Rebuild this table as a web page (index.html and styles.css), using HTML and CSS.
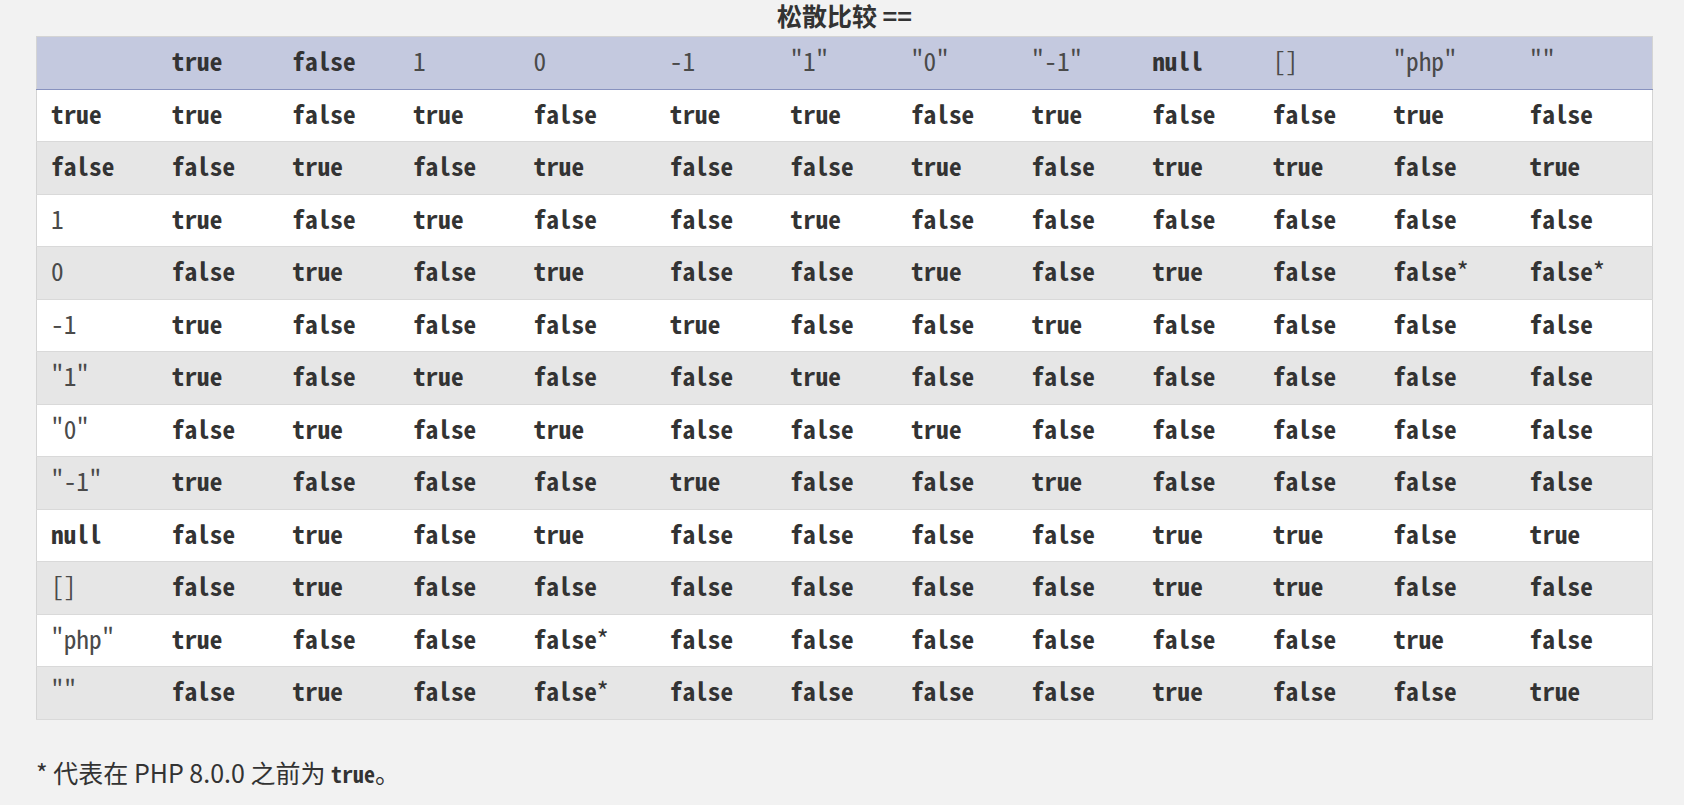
FILE: index.html
```html
<!DOCTYPE html>
<html lang="zh-CN">
<head>
<meta charset="utf-8">
<title>松散比较</title>
<link rel="stylesheet" href="styles.css">
</head>
<body>
<main class="page">
<table class="doctable">
<caption><strong>松散比较 <code class="cap-code">==</code></strong></caption>
<thead>
<tr><th></th><th><code class="b">true</code></th><th><code class="b">false</code></th><th><code class="c">1</code></th><th><code class="c">0</code></th><th><code class="c">-1</code></th><th><code class="c">"1"</code></th><th><code class="c">"0"</code></th><th><code class="c">"-1"</code></th><th><code class="b">null</code></th><th><code class="c">[]</code></th><th><code class="c">"php"</code></th><th><code class="c">""</code></th></tr>
</thead>
<tbody>
<tr><td><code class="b">true</code></td><td><code class="b">true</code></td><td><code class="b">false</code></td><td><code class="b">true</code></td><td><code class="b">false</code></td><td><code class="b">true</code></td><td><code class="b">true</code></td><td><code class="b">false</code></td><td><code class="b">true</code></td><td><code class="b">false</code></td><td><code class="b">false</code></td><td><code class="b">true</code></td><td><code class="b">false</code></td></tr>
<tr><td><code class="b">false</code></td><td><code class="b">false</code></td><td><code class="b">true</code></td><td><code class="b">false</code></td><td><code class="b">true</code></td><td><code class="b">false</code></td><td><code class="b">false</code></td><td><code class="b">true</code></td><td><code class="b">false</code></td><td><code class="b">true</code></td><td><code class="b">true</code></td><td><code class="b">false</code></td><td><code class="b">true</code></td></tr>
<tr><td><code class="c">1</code></td><td><code class="b">true</code></td><td><code class="b">false</code></td><td><code class="b">true</code></td><td><code class="b">false</code></td><td><code class="b">false</code></td><td><code class="b">true</code></td><td><code class="b">false</code></td><td><code class="b">false</code></td><td><code class="b">false</code></td><td><code class="b">false</code></td><td><code class="b">false</code></td><td><code class="b">false</code></td></tr>
<tr><td><code class="c">0</code></td><td><code class="b">false</code></td><td><code class="b">true</code></td><td><code class="b">false</code></td><td><code class="b">true</code></td><td><code class="b">false</code></td><td><code class="b">false</code></td><td><code class="b">true</code></td><td><code class="b">false</code></td><td><code class="b">true</code></td><td><code class="b">false</code></td><td><code class="b">false</code><span class="star">*</span></td><td><code class="b">false</code><span class="star">*</span></td></tr>
<tr><td><code class="c">-1</code></td><td><code class="b">true</code></td><td><code class="b">false</code></td><td><code class="b">false</code></td><td><code class="b">false</code></td><td><code class="b">true</code></td><td><code class="b">false</code></td><td><code class="b">false</code></td><td><code class="b">true</code></td><td><code class="b">false</code></td><td><code class="b">false</code></td><td><code class="b">false</code></td><td><code class="b">false</code></td></tr>
<tr><td><code class="c">"1"</code></td><td><code class="b">true</code></td><td><code class="b">false</code></td><td><code class="b">true</code></td><td><code class="b">false</code></td><td><code class="b">false</code></td><td><code class="b">true</code></td><td><code class="b">false</code></td><td><code class="b">false</code></td><td><code class="b">false</code></td><td><code class="b">false</code></td><td><code class="b">false</code></td><td><code class="b">false</code></td></tr>
<tr><td><code class="c">"0"</code></td><td><code class="b">false</code></td><td><code class="b">true</code></td><td><code class="b">false</code></td><td><code class="b">true</code></td><td><code class="b">false</code></td><td><code class="b">false</code></td><td><code class="b">true</code></td><td><code class="b">false</code></td><td><code class="b">false</code></td><td><code class="b">false</code></td><td><code class="b">false</code></td><td><code class="b">false</code></td></tr>
<tr><td><code class="c">"-1"</code></td><td><code class="b">true</code></td><td><code class="b">false</code></td><td><code class="b">false</code></td><td><code class="b">false</code></td><td><code class="b">true</code></td><td><code class="b">false</code></td><td><code class="b">false</code></td><td><code class="b">true</code></td><td><code class="b">false</code></td><td><code class="b">false</code></td><td><code class="b">false</code></td><td><code class="b">false</code></td></tr>
<tr><td><code class="b">null</code></td><td><code class="b">false</code></td><td><code class="b">true</code></td><td><code class="b">false</code></td><td><code class="b">true</code></td><td><code class="b">false</code></td><td><code class="b">false</code></td><td><code class="b">false</code></td><td><code class="b">false</code></td><td><code class="b">true</code></td><td><code class="b">true</code></td><td><code class="b">false</code></td><td><code class="b">true</code></td></tr>
<tr><td><code class="c">[]</code></td><td><code class="b">false</code></td><td><code class="b">true</code></td><td><code class="b">false</code></td><td><code class="b">false</code></td><td><code class="b">false</code></td><td><code class="b">false</code></td><td><code class="b">false</code></td><td><code class="b">false</code></td><td><code class="b">true</code></td><td><code class="b">true</code></td><td><code class="b">false</code></td><td><code class="b">false</code></td></tr>
<tr><td><code class="c">"php"</code></td><td><code class="b">true</code></td><td><code class="b">false</code></td><td><code class="b">false</code></td><td><code class="b">false</code><span class="star">*</span></td><td><code class="b">false</code></td><td><code class="b">false</code></td><td><code class="b">false</code></td><td><code class="b">false</code></td><td><code class="b">false</code></td><td><code class="b">false</code></td><td><code class="b">true</code></td><td><code class="b">false</code></td></tr>
<tr><td><code class="c">""</code></td><td><code class="b">false</code></td><td><code class="b">true</code></td><td><code class="b">false</code></td><td><code class="b">false</code><span class="star">*</span></td><td><code class="b">false</code></td><td><code class="b">false</code></td><td><code class="b">false</code></td><td><code class="b">false</code></td><td><code class="b">true</code></td><td><code class="b">false</code></td><td><code class="b">false</code></td><td><code class="b">true</code></td></tr>
</tbody>
</table>
<p class="note">* 代表在 PHP 8.0.0 之前为 <code class="note-code">true</code>。</p>
</main>
</body>
</html>
```
FILE: styles.css
```css
html, body {
  margin: 0;
  padding: 0;
  background: #f2f2f2;
}

body {
  font-family: "Noto Sans CJK SC", "Noto Sans", sans-serif;
  color: #333;
}

.page {
  margin-left: 36px;
  width: 1617px;
}

.doctable {
  width: 100%;
  border-collapse: collapse;
  border: 1px solid #d4d4d4;
}

.doctable caption {
  font-size: 25px;
  line-height: 30px;
  padding-bottom: 6px;
  text-align: center;
  color: #333;
}

.cap-code {
  font-family: "Noto Sans Mono CJK SC", "DejaVu Sans Mono", monospace;
  font-size: 22px;
  font-weight: 700;
}

.doctable thead tr {
  background: #c4c9df;
  border-bottom: 1px solid #8892bf;
}

.doctable tbody tr {
  background: #fff;
  border-bottom: 1px solid #d9d9d9;
}

.doctable tbody tr:nth-child(even) {
  background: #e6e6e6;
}

.doctable th,
.doctable td {
  text-align: left;
  font-weight: 400;
  font-family: "Noto Sans Mono CJK SC", "DejaVu Sans Mono", monospace;
  font-size: 25.33px;
  line-height: 31.5px;
  padding: 8px 14px 12px;
  white-space: nowrap;
}

.doctable code {
  font-family: inherit;
  font-size: inherit;
  line-height: inherit;
}

.b {
  font-weight: 700;
  color: #333;
}

.c {
  font-weight: 400;
  color: #4a4a4a;
}

.star {
  font-family: "Noto Sans CJK SC", sans-serif;
  color: #333;
}

.note {
  margin: 34px 0 0;
  font-size: 25px;
  line-height: 36px;
}

.note-code {
  font-family: "Noto Sans Mono CJK SC", "DejaVu Sans Mono", monospace;
  font-weight: 700;
  font-size: 22px;
}
```
